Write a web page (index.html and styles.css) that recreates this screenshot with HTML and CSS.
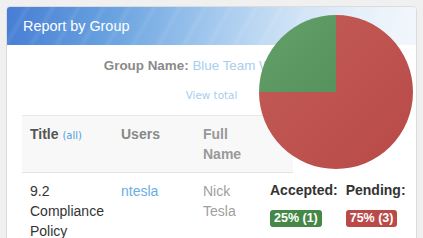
FILE: index.html
```html
<!DOCTYPE html>
<html lang="en">
<head>
    <meta charset="UTF-8">
    <title>Report by Group</title>
    <link rel="stylesheet" href="styles.css">
</head>
<body>
    <div class="panel">
        <div class="panel-header">
            <h2>Report by Group</h2>
        </div>
        <div class="panel-body">
            <p class="group-name"><b>Group Name:</b> <span class="group-value">Blue Team Week 123</span></p>
            <p class="view-total"><a href="#">View total</a></p>
            <table class="report">
                <thead>
                    <tr>
                        <th class="col-title">Title <a href="#" class="all-link">(all)</a></th>
                        <th class="col-users">Users</th>
                        <th class="col-name">Full Name</th>
                        <th class="col-status"></th>
                    </tr>
                </thead>
                <tbody>
                    <tr>
                        <td>9.2 Compliance Policy</td>
                        <td><a href="#" class="user-link">ntesla</a></td>
                        <td class="full-name">Nick Tesla</td>
                        <td class="status">
                            <div class="status-row">
                                <div class="status-item">
                                    <h4>Accepted:</h4>
                                    <span class="label label-success">25% (1)</span>
                                </div>
                                <div class="status-item">
                                    <h4>Pending:</h4>
                                    <span class="label label-danger">75% (3)</span>
                                </div>
                            </div>
                        </td>
                    </tr>
                </tbody>
            </table>
        </div>
        <svg class="pie" width="156" height="156" viewBox="0 0 156 156">
            <defs>
                <linearGradient id="redFill" x1="0" y1="0" x2="1" y2="1">
                    <stop offset="0" stop-color="#c45c58"/>
                    <stop offset="1" stop-color="#b84a47"/>
                </linearGradient>
                <linearGradient id="greenFill" x1="0" y1="0" x2="1" y2="1">
                    <stop offset="0" stop-color="#63a06a"/>
                    <stop offset="1" stop-color="#55925c"/>
                </linearGradient>
            </defs>
            <path d="M78 78 L78 1 A77 77 0 1 1 1 78 Z" fill="url(#redFill)"/>
            <path d="M78 78 L1 78 A77 77 0 0 1 78 1 Z" fill="url(#greenFill)"/>
        </svg>
    </div>
</body>
</html>
```

FILE: styles.css
```css
html, body {
    margin: 0;
    height: 100%;
    background-color: #f0f0f0;
    font-family: "Liberation Sans", Arial, sans-serif;
    font-size: 14px;
    color: #333;
}
body {
    padding: 6px 6px 0 6px;
    box-sizing: border-box;
    overflow: hidden;
}
.panel {
    position: relative;
    width: 409px;
    height: 240px;
    background-color: #fff;
    border: 1px solid #dcdcdc;
    border-radius: 4px;
}
.panel-header {
    height: 38px;
    border-radius: 3px 3px 0 0;
    background:
        repeating-linear-gradient(120deg, rgba(255, 255, 255, 0) 0, rgba(255, 255, 255, 0) 14px, rgba(255, 255, 255, 0.08) 18px, rgba(255, 255, 255, 0) 22px),
        linear-gradient(100deg, #477dd5 0%, #67a1df 25%, #a2c8ee 50%, #cce1f5 68%, #e6f0fa 85%, #f2f7fc 100%);
    display: flex;
    align-items: center;
    padding-left: 16px;
}
.panel-header h2 {
    margin: 0;
    font-size: 14.4px;
    font-weight: normal;
    color: #fff;
}
.panel-body {
    padding: 0 15px;
}
.group-name {
    margin: 11px 0 0 0;
    text-align: center;
    font-size: 13.4px;
    line-height: 20px;
    color: #8a8a8a;
}
.group-value {
    color: #a9cdee;
}
.view-total {
    margin: 12px 0 0 0;
    text-align: center;
    font-family: "DejaVu Sans", Verdana, sans-serif;
    font-size: 10.4px;
    line-height: 14px;
}
.view-total a {
    color: #a8cdee;
    text-decoration: none;
}
.report {
    margin-top: 13px;
    width: 271px;
    table-layout: fixed;
    border-collapse: collapse;
    border-top: 1px solid #e8e8e8;
}
.report th, .report td {
    padding: 8px;
    line-height: 20px;
    text-align: left;
    vertical-align: top;
}
.report thead tr {
    background-color: #f8f8f8;
    border-bottom: 1px solid #e4e4e4;
}
.report th {
    font-weight: bold;
    color: #888;
}
.report th.col-title {
    width: 75px;
    color: #555;
}
.col-users {
    width: 66px;
}
.col-name {
    width: 51px;
    color: #999 !important;
}
.col-status {
    width: 15px;
}
.all-link {
    font-family: "DejaVu Sans", Verdana, sans-serif;
    font-size: 10px;
    font-weight: normal;
    color: #4f9fe0;
    text-decoration: none;
}
.user-link {
    color: #69aee4;
    text-decoration: none;
}
.full-name {
    color: #a0a0a0;
}
.status {
    white-space: nowrap;
}
.status-row {
    display: flex;
    gap: 8px;
}
.status-item h4 {
    margin: 0 0 8px 0;
    font-size: 14px;
    line-height: 18px;
    color: #333;
}
.label {
    display: inline-block;
    padding: 0 4px;
    border-radius: 3px;
    font-size: 12.5px;
    font-weight: bold;
    line-height: 17px;
    color: #fff;
}
.label-success {
    background-color: #468847;
}
.label-danger {
    background-color: #b94a48;
}
.pie {
    position: absolute;
    left: 251px;
    top: 7px;
}
```
